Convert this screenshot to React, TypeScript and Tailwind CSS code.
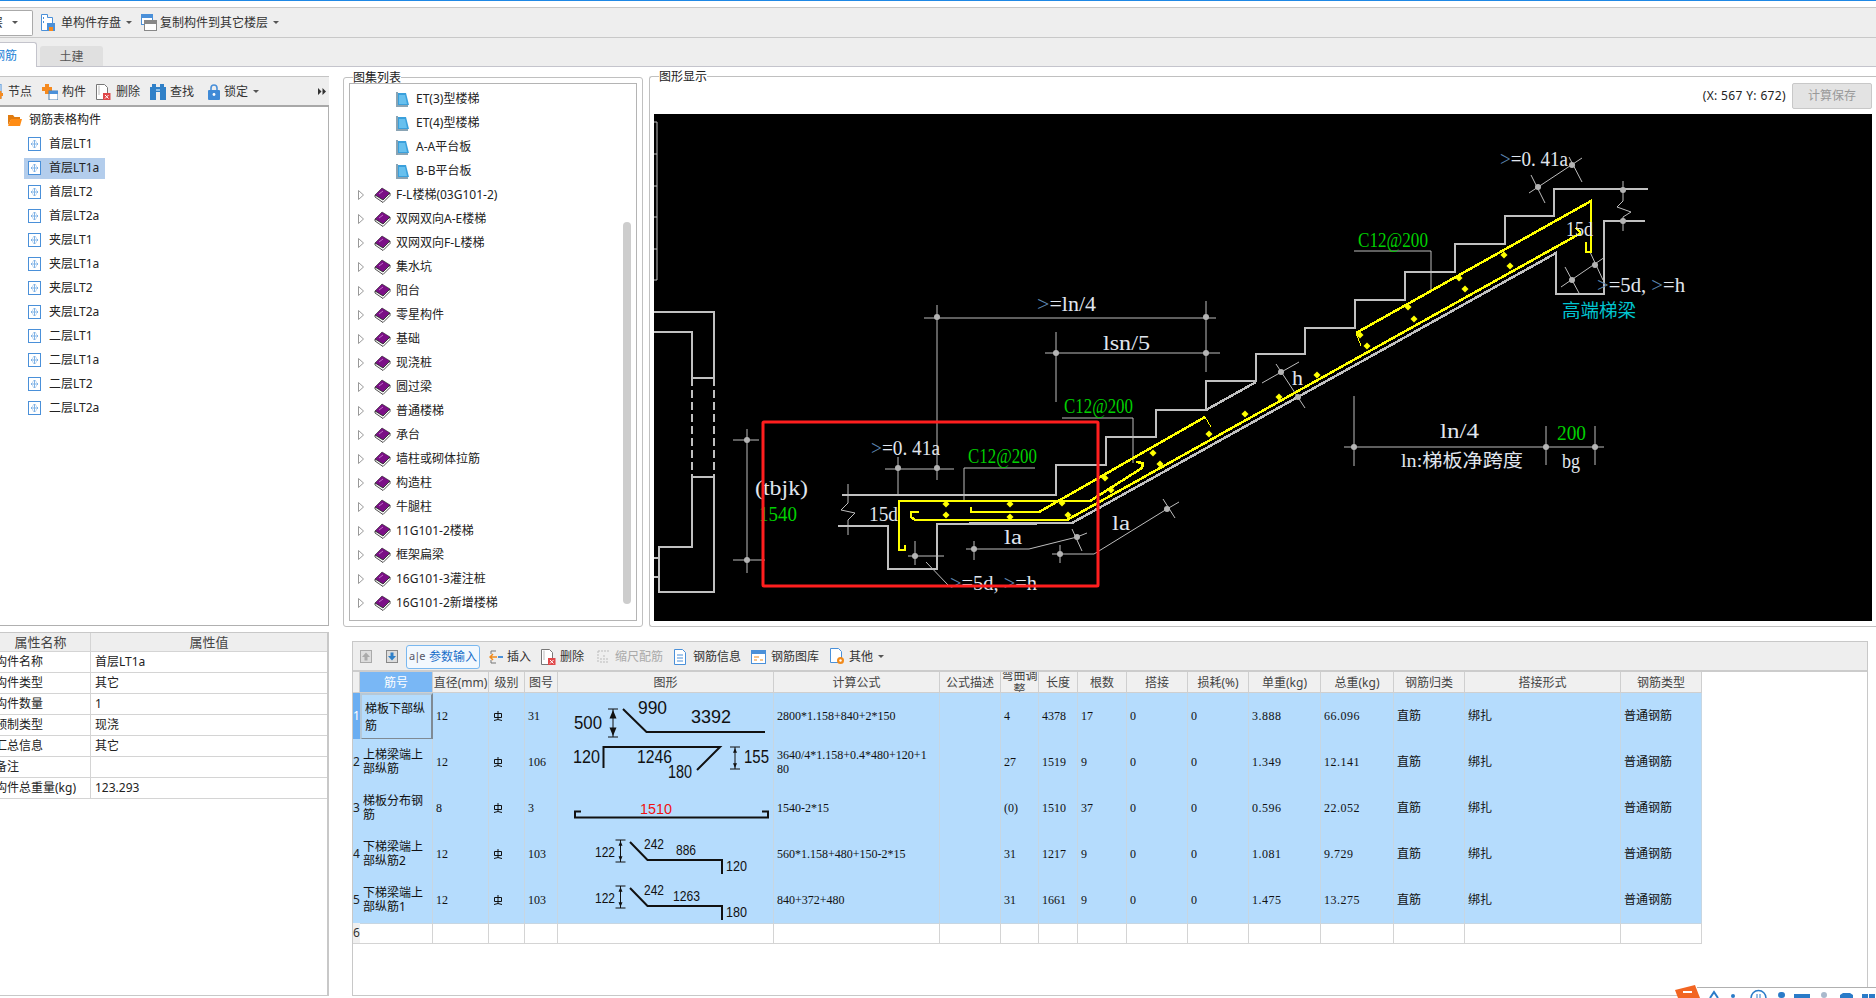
import type { ReactNode } from "react";

const SERIF = "'Liberation Serif','Noto Sans CJK SC',serif";
const SANS = "'Liberation Sans',sans-serif";

const treeItems = [
  "首层LT1", "首层LT1a", "首层LT2", "首层LT2a", "夹层LT1", "夹层LT1a",
  "夹层LT2", "夹层LT2a", "二层LT1", "二层LT1a", "二层LT2", "二层LT2a",
];

const sheetItems = ["ET(3)型楼梯", "ET(4)型楼梯", "A-A平台板", "B-B平台板"];

const bookItems = [
  "F-L楼梯(03G101-2)", "双网双向A-E楼梯", "双网双向F-L楼梯", "集水坑", "阳台", "零星构件",
  "基础", "现浇桩", "圆过梁", "普通楼梯", "承台", "墙柱或砌体拉筋", "构造柱", "牛腿柱",
  "11G101-2楼梯", "框架扁梁", "16G101-3灌注桩", "16G101-2新增楼梯",
];

const properties = [
  ["构件名称", "首层LT1a"],
  ["构件类型", "其它"],
  ["构件数量", "1"],
  ["预制类型", "现浇"],
  ["汇总信息", "其它"],
  ["备注", ""],
  ["构件总重量(kg)", "123.293"],
];

const headers = [
  "", "筋号", "直径(mm)", "级别", "图号", "图形", "计算公式", "公式描述", "弯曲调整", "长度",
  "根数", "搭接", "损耗(%)", "单重(kg)", "总重(kg)", "钢筋归类", "搭接形式", "钢筋类型",
];

const rows = [
  { name: "梯板下部纵筋", dia: "12", no: "31", formula: "2800*1.158+840+2*150", bend: "4", len: "4378", count: "17", unit: "3.888", total: "66.096" },
  { name: "上梯梁端上部纵筋", dia: "12", no: "106", formula: "3640/4*1.158+0.4*480+120+1\n80", bend: "27", len: "1519", count: "9", unit: "1.349", total: "12.141" },
  { name: "梯板分布钢筋", dia: "8", no: "3", formula: "1540-2*15", bend: "(0)", len: "1510", count: "37", unit: "0.596", total: "22.052" },
  { name: "下梯梁端上部纵筋2", dia: "12", no: "103", formula: "560*1.158+480+150-2*15", bend: "31", len: "1217", count: "9", unit: "1.081", total: "9.729" },
  { name: "下梯梁端上部纵筋1", dia: "12", no: "103", formula: "840+372+480", bend: "31", len: "1661", count: "9", unit: "1.475", total: "13.275" },
];

// page coordinates, the drawing's viewBox starts at the canvas corner
const grayLines = [
  "654,312 714,312 714,378", "654,332 692,332 692,378", "692,378 714,378",
  "692,477 714,477", "692,477 692,547 659,547 659,592 714,592 714,477",
  "654,558 659,558", "654,577 659,577",
  "842,495 1056,495 1056,465 1106,465 1106,437 1156,437 1156,410 1206,410 1206,381 1256,381 1256,354 1305,354 1305,328 1355,328 1355,300 1405,300 1405,272 1455,272 1455,244 1505,244 1505,216 1554,216 1554,189 1648,189",
  "1206,410 1256,382",
  "838,526 888,526 888,569 937,569 937,524 1072,523 1556,253 1556,294 1604,294 1604,221 1645,221",
];

const thinLines = [
  "654,122 657,122 657,280 654,280", "654,154 657,154", "654,186 657,186", "654,217 657,217", "654,249 657,249",
  "747,429 747,573", "733,440 759,440", "733,560 765,560",
  "885,469 954,469", "898,457 898,495", "937,305 937,480",
  "924,318 1216,318", "1206,301 1206,372", "1045,353 1220,353", "1056,332 1056,402",
  "1062,418 1133,418 1133,463", "964,500 964,468 1035,468",
  "1354,251 1431,251 1431,290",
  "848,484 848,503 841,510 855,513 848,520 848,535",
  "915,541 915,565", "908,556 944,556", "926,562 948,585",
  "966,549 1029,549 1077,537 1087,533", "974,541 974,560", "1072,529 1082,551",
  "1052,554 1094,554 1167,509 1179,502", "1060,545 1060,563", "1163,499 1175,518",
  "1529,193 1582,158", "1531,175 1545,203", "1569,157 1582,182",
  "1623,181 1623,201 1617,207 1631,212 1623,217 1623,231",
  "1561,287 1605,257", "1565,267 1579,293", "1590,252 1603,280",
  "1276,364 1305,408", "1262,383 1299,362",
  "1344,447 1604,447", "1354,396 1354,466", "1546,426 1546,465", "1595,426 1595,465",
];

const dimDots = [
  [747, 440], [747, 560], [898, 468], [937, 468], [937, 317], [1206, 317], [1056, 353], [1206, 353],
  [915, 556], [974, 549], [1077, 537], [1060, 554], [1167, 509], [1538, 187], [1572, 165], [1623, 190],
  [1623, 221], [1572, 280], [1595, 265], [1281, 372], [1298, 397], [1354, 447], [1546, 447], [1595, 447],
];

const yellowLines = [
  "1586,242 1586,252 1591,252 1591,201 1356,333",
  "1581,233 1067,520 915,520 911,517 911,512 919,512",
  "1576,228 1581,233",
  "905,545 905,550 899,550 899,501 1090,501 1142,468 1143,463 1136,462",
  "971,507 971,512 1039,512 1205,417",
];

const yellowDots = [
  [946, 504], [946, 515], [1010, 504], [1010, 517], [1062, 503], [1068, 515], [1105, 478], [1111, 490],
  [1153, 453], [1160, 464], [1209, 434], [1245, 414], [1279, 397], [1317, 375], [1360, 335], [1367, 346],
  [1408, 307], [1414, 319], [1459, 278], [1465, 289], [1504, 255], [1510, 266],
];

function CadText({ x, y, w, fill = "#e0e6ee", size = 20, children }: { x: number; y: number; w: number; fill?: string; size?: number; children: ReactNode }) {
  return (
    <text x={x} y={y} textLength={w} lengthAdjust="spacingAndGlyphs" fill={fill} fontSize={size} fontFamily={SERIF} dominantBaseline="central">
      {children}
    </text>
  );
}

function StairDrawing() {
  return (
    <svg viewBox="654 114 1218 507" width={1218} height={507} className="block bg-black">
      <g fill="none" stroke="#c0c0c0" strokeWidth={2.5} shapeRendering="crispEdges">
        {grayLines.map((p) => <polyline key={p} points={p} />)}
        <path d="M692 378V477M714 378V477" strokeDasharray="8 4" />
      </g>
      <g fill="none" stroke="#bdbdbd" strokeWidth={1}>
        {thinLines.map((p) => <polyline key={p} points={p} />)}
      </g>
      {dimDots.map(([x, y]) => <circle key={`${x}-${y}`} cx={x} cy={y} r={3} fill="#b4b4b4" />)}
      <g fill="none" stroke="#ffff00" strokeWidth={2.5} shapeRendering="crispEdges">
        {yellowLines.map((p) => <polyline key={p} points={p} />)}
        <path d="M1205 417L1211 427M1356 333L1361 346" strokeWidth={1} />
      </g>
      {yellowDots.map(([x, y]) => <rect key={`${x}-${y}`} x={x - 2.5} y={y - 2.5} width={5} height={5} fill="#ffff00" transform={`rotate(45 ${x} ${y})`} />)}

      <CadText x={1037} y={304} w={59}><tspan fill="#5d86b0">&gt;</tspan>=ln/4</CadText>
      <CadText x={1103} y={343} w={47}>lsn/5</CadText>
      <CadText x={1500} y={159} w={68}><tspan fill="#5d86b0">&gt;</tspan>=0. 41a</CadText>
      <CadText x={1358} y={240} w={70} fill="#00d000">C12@200</CadText>
      <CadText x={1566} y={229} w={27}>15d</CadText>
      <CadText x={1597} y={285} w={88}><tspan fill="#5d86b0">&gt;</tspan>=5d, <tspan fill="#5d86b0">&gt;</tspan>=h</CadText>
      <CadText x={1562} y={311} w={74} fill="#00c4d0" size={18}>高端梯梁</CadText>
      <CadText x={1292} y={378} w={11}>h</CadText>
      <CadText x={1440} y={431} w={39}>ln/4</CadText>
      <CadText x={1557} y={433} w={29} fill="#00d000">200</CadText>
      <CadText x={1401} y={461} w={122} size={18}>ln:梯板净跨度</CadText>
      <CadText x={1562} y={461} w={18}>bg</CadText>
      <CadText x={1064} y={406} w={69} fill="#00d000">C12@200</CadText>
      <CadText x={968} y={456} w={69} fill="#00d000">C12@200</CadText>
      <CadText x={871} y={448} w={69}><tspan fill="#5d86b0">&gt;</tspan>=0. 41a</CadText>
      <CadText x={755} y={488} w={53}>(tbjk)</CadText>
      <CadText x={759} y={514} w={38} fill="#00d000">1540</CadText>
      <CadText x={869} y={514} w={29}>15d</CadText>
      <CadText x={1004} y={537} w={18}>la</CadText>
      <CadText x={1112} y={523} w={18}>la</CadText>
      <CadText x={950} y={583} w={87}><tspan fill="#5d86b0">&gt;</tspan>=5d, <tspan fill="#5d86b0">&gt;</tspan>=h</CadText>

      <rect x={763} y={422} width={335} height={164} rx={1} fill="none" stroke="#ff1e1e" strokeWidth={3} />
    </svg>
  );
}

function ShapeText({ x, y, w, size = 18, fill = "#111", children }: { x: number; y: number; w: number; size?: number; fill?: string; children: ReactNode }) {
  return (
    <text x={x} y={y} textLength={w} lengthAdjust="spacingAndGlyphs" fontSize={size} fill={fill} fontFamily={SANS} dominantBaseline="central">
      {children}
    </text>
  );
}

function DimBar({ x, top, bottom, head = 3 }: { x: number; top: number; bottom: number; head?: number }) {
  return (
    <g>
      <path d={`M${x - 5} ${top}h10M${x} ${top}V${bottom}M${x - 5} ${bottom}h10`} stroke="#111" fill="none" />
      <path d={`M${x} ${top + 1}l${head} ${head * 2.4}h${-head * 2}zM${x} ${bottom - 1}l${head} ${-head * 2.4}h${-head * 2}z`} fill="#111" />
    </g>
  );
}

function RebarShape({ index }: { index: number }) {
  return (
    <svg viewBox="0 0 216 46" width={216} height={46} className="block">
      {index === 0 && (
        <g>
          <ShapeText x={16} y={29} w={28} size={19}>500</ShapeText>
          <DimBar x={55} top={16} bottom={44} head={3.5} />
          <path d="M65 16L88.5 39H207" fill="none" stroke="#111" strokeWidth={2} />
          <ShapeText x={80} y={14} w={29} size={19}>990</ShapeText>
          <ShapeText x={133} y={23} w={40} size={19}>3392</ShapeText>
        </g>
      )}
      {index === 1 && (
        <g>
          <ShapeText x={15} y={18} w={27}>120</ShapeText>
          <path d="M45.5 29V8H162L139 31" fill="none" stroke="#111" strokeWidth={2} />
          <ShapeText x={79} y={18} w={35}>1246</ShapeText>
          <ShapeText x={110} y={33} w={24}>180</ShapeText>
          <DimBar x={177} top={8} bottom={30} head={2} />
          <ShapeText x={186} y={18} w={25}>155</ShapeText>
        </g>
      )}
      {index === 2 && (
        <g>
          <ShapeText x={82} y={23} w={32} size={15} fill="#f01010">1510</ShapeText>
          <path d="M23 26.5H17V32.5H210V26.5H204" fill="none" stroke="#111" strokeWidth={2} />
        </g>
      )}
      {index > 2 && (
        <g>
          <ShapeText x={37} y={20} w={20} size={15}>122</ShapeText>
          <DimBar x={62.5} top={9} bottom={31} head={2} />
          <path d="M72 11L89.5 29H164V43" fill="none" stroke="#111" strokeWidth={2} />
          <ShapeText x={86} y={12} w={20} size={15}>242</ShapeText>
          {index === 3 ? (
            <ShapeText x={118} y={18} w={20} size={15}>886</ShapeText>
          ) : (
            <ShapeText x={115} y={18} w={27} size={15}>1263</ShapeText>
          )}
          <ShapeText x={168} y={34} w={21} size={15}>{index === 3 ? "120" : "180"}</ShapeText>
        </g>
      )}
    </svg>
  );
}

function Caret({ className = "" }: { className?: string }) {
  return <span className={`inline-block h-0 w-0 border-x-[3px] border-t-[3px] border-x-transparent border-t-[#555] ${className}`} />;
}

function GradeMark() {
  return (
    <svg viewBox="0 0 10 11" width={10} height={11} fill="none" stroke="#111" strokeWidth={1}>
      <path d="M1.5 2.5h7v4h-7zM5 0v8.5M1 9.5l4-1 4 1" />
    </svg>
  );
}

function TreeNodeIcon() {
  return (
    <svg viewBox="0 0 13 14" width={13} height={14} className="shrink-0" fill="none">
      <rect x={0.5} y={0.5} width={12} height={13} fill="#fff" stroke="#4a90d9" />
      <path d="M6.5 3v8M3 7h7M6.5 3L5 4.5M6.5 3L8 4.5M3 7l1.5-1.5M3 7l1.5 1.5M10 7L8.5 5.5M10 7L8.5 8.5M6.5 11L5 9.5M6.5 11L8 9.5" stroke="#7fb2e6" />
    </svg>
  );
}

function FolderIcon() {
  return (
    <svg viewBox="0 0 14 12" width={14} height={12} className="shrink-0">
      <path d="M0 1h5l1.5 2H12v2H3.5L0 11z" fill="#e07b10" />
      <path d="M3 5h11l-2 7H0z" fill="#ff8c14" />
    </svg>
  );
}

function BookIcon() {
  return (
    <svg viewBox="0 0 17 16" width={17} height={16} className="shrink-0">
      <path d="M1 8L8 1L16 6L9 13z" fill="#7b0f86" stroke="#222" strokeWidth={0.6} />
      <path d="M1 8V10L9 15.5L16 8.5V6L9 13z" fill="#fff" stroke="#222" strokeWidth={0.8} />
      <path d="M5 7L9 4" stroke="#c070c8" />
    </svg>
  );
}

function SheetIcon() {
  return (
    <svg viewBox="0 0 13 15" width={13} height={15} className="shrink-0">
      <path d="M1 1h9l3 12H1z" fill="#3aa0dc" />
      <path d="M3 3h6l2 9H3z" fill="#67c0ee" />
      <path d="M0 0h2v15H0zM0 13h12v2H0z" fill="#8aa4b4" />
    </svg>
  );
}

function DocIcon({ badge, stroke = "#777", lines = false }: { badge?: string; stroke?: string; lines?: boolean }) {
  return (
    <svg viewBox="0 0 15 16" width={15} height={16} className="shrink-0" fill="none">
      <path d="M.5.5h8l3 3v12h-11z" fill="#fff" stroke={stroke} />
      {!lines && <path d="M3 1.5V11" stroke="#bbb" />}
      {lines && <path d="M3 6h6M3 9h6M3 12h6" stroke={stroke} />}
      {badge && <rect x={7} y={9} width={7.5} height={7} fill={badge} />}
      {badge && <path d="M9 11l3.5 3.5M12.5 11L9 14.5" stroke="#fff" />}
    </svg>
  );
}

function ToolItem({ icon, label, className = "", textClass = "" }: { icon: ReactNode; label: string; className?: string; textClass?: string }) {
  return (
    <div className={`flex shrink-0 items-center ${className}`}>
      {icon}
      <span className={`whitespace-nowrap ${textClass}`}>{label}</span>
    </div>
  );
}

function LeftToolbar() {
  return (
    <div className="flex h-[31px] items-center border-y border-b-2 border-y-[#c4c4c4] border-b-[#a8a8a8] bg-[#eeeeee] pt-[1px] text-[12px] text-[#333]">
      <ToolItem className="-ml-[11px]" icon={
        <svg viewBox="0 0 15 16" width={15} height={16} className="mr-[4px]"><rect x={1} y={0} width={11} height={14} fill="#fff" stroke="#4a90d9" /><path d="M8 9h6v3h-6zM9.5 7h3v8h-3z" fill="#f58a1f" /></svg>
      } label="节点" />
      <ToolItem className="ml-[10px]" icon={
        <svg viewBox="0 0 16 16" width={16} height={16} className="mr-[4px]"><path d="M3 0h4v3h3v4H7v3H3V7H0V3h3z" fill="#f58a1f" /><rect x={7} y={7} width={9} height={9} fill="#fff" stroke="#4a7fb0" /><path d="M7 7h9v3H7z" fill="#4a90d9" /></svg>
      } label="构件" />
      <ToolItem className="ml-[10px]" icon={<span className="mr-[5px] flex"><DocIcon badge="#e0484a" /></span>} label="删除" />
      <ToolItem className="ml-[10px]" icon={
        <svg viewBox="0 0 16 16" width={16} height={16} className="mr-[4px]" fill="#2f80c8"><path d="M2 0h4v3h4V0h4v3h2v13H10V8H6v8H0V3h2z" /><path d="M6 5h4v2H6z" fill="#8cc0ea" /></svg>
      } label="查找" />
      <ToolItem className="ml-[14px]" icon={
        <svg viewBox="0 0 12 16" width={12} height={16} className="mr-[4px]"><path d="M3 7V4a3 3 0 016 0v3" fill="none" stroke="#4a90d9" strokeWidth={1.6} /><rect y={6} width={12} height={10} rx={1} fill="#3f8ad6" /><circle cx={6} cy={10.5} r={1.4} fill="#fff" /></svg>
      } label="锁定" />
      <Caret className="ml-[5px]" />
      <svg viewBox="0 0 8 7" width={8} height={7} className="ml-auto mr-[3px]" fill="#333"><path d="M0 0l3.5 3.5L0 7zM4.5 0L8 3.5 4.500 7z" /></svg>
    </div>
  );
}

function ComponentTree() {
  return (
    <div className="h-[519px] border-r border-b border-[#b0b0b0] pt-[1px] text-[12px] text-[#222]">
      <div className="flex h-[24px] items-center gap-[7px] pl-[8px]">
        <FolderIcon />
        <span>钢筋表格构件</span>
      </div>
      {treeItems.map((item) => (
        <div key={item} className="flex h-[24px] items-center pl-[24px]">
          <div className={`flex h-[21px] w-[81px] items-center gap-[8px] pl-[4px] ${item === "首层LT1a" ? "bg-[#b3cdec]" : ""}`}>
            <TreeNodeIcon />
            <span>{item}</span>
          </div>
        </div>
      ))}
    </div>
  );
}

function PropertyGrid() {
  return (
    <div className="mt-[6px] h-[364px] overflow-hidden border-t border-r-2 border-b border-t-[#c8c8c8] border-r-[#c8c8c8] border-b-[#c8c8c8] text-[12px] text-[#222]">
      <div className="-ml-[9px] grid grid-cols-[100px_236px] border-b border-[#d4d4d4] bg-[#eeeeee] text-center text-[13px] text-[#444]">
        <div className="h-[18px] border-r border-[#d4d4d4] leading-[18px]">属性名称</div>
        <div className="h-[18px] leading-[18px]">属性值</div>
      </div>
      {properties.map(([name, value]) => (
        <div key={name} className="-ml-[9px] grid h-[21px] grid-cols-[100px_236px] border-b border-[#d4d4d4] leading-[20px]">
          <div className="border-r border-[#d4d4d4] pl-[4px]">{name}</div>
          <div className="pl-[4px]">{value}</div>
        </div>
      ))}
    </div>
  );
}

function AtlasGroup() {
  return (
    <div className="relative mt-[1px] h-[550px] w-[300px] shrink-0 rounded-[3px] border border-[#c0c0c0] p-[5px] text-[12px] text-[#222]">
      <span className="absolute -top-[8px] left-[9px] bg-white leading-[15px]">图集列表</span>
      <div className="relative h-[538px] overflow-hidden border border-[#b4b4b4] pt-[3px]">
        {sheetItems.map((item) => (
          <div key={item} className="flex h-[24px] items-center gap-[7px] pl-[46px]"><SheetIcon /><span>{item}</span></div>
        ))}
        {bookItems.map((item) => (
          <div key={item} className="flex h-[24px] items-center pl-[8px]">
            <svg viewBox="0 0 6 10" width={6} height={10} className="mr-[10px] shrink-0"><path d="M.5.5L5.5 5L.5 9.5z" fill="#fff" stroke="#999" /></svg>
            <BookIcon />
            <span className="ml-[5px]">{item}</span>
          </div>
        ))}
        <div className="absolute left-[273px] top-[138px] h-[382px] w-[8px] rounded-[4px] bg-[#cdcdcd]" />
      </div>
    </div>
  );
}

function DrawingGroup() {
  return (
    <div className="relative ml-[6px] h-[551px] w-[1227px] shrink-0 rounded-tl-[3px] rounded-bl-[3px] border border-r-0 border-[#c0c0c0] pl-[4px] text-[12px]">
      <span className="absolute -top-[8px] left-[9px] bg-white leading-[15px] text-[#222]">图形显示</span>
      <div className="flex h-[37px] items-center justify-end pr-[4px]">
        <span className="mr-[6px] tracking-[0.35px] text-[#222]">(X: 567 Y: 672)</span>
        <button className="h-[26px] w-[80px] rounded-[2px] border border-[#c8c8c8] bg-[#e3e3e3] text-[#999]">计算保存</button>
      </div>
      <StairDrawing />
    </div>
  );
}

function BarToolbar() {
  return (
    <div className="flex h-[30px] items-center border-b-2 border-[#cccccc] bg-[#eeeeee] pl-[7px] pt-[1px] text-[12px] text-[#333]">
      <svg viewBox="0 0 12 13" width={12} height={13} className="shrink-0"><rect x={0.5} y={0.5} width={11} height={12} fill="#ddd" stroke="#aaa" /><path d="M6 2.5L10 7H7.5v3.5h-3V7H2z" fill="#aaa" /></svg>
      <svg viewBox="0 0 12 13" width={12} height={13} className="ml-[14px] shrink-0"><rect x={0.5} y={0.5} width={11} height={12} fill="#ddd" stroke="#888" /><path d="M6 10.5L10 6H7.5V2.5h-3V6H2z" fill="#2f80c8" /></svg>
      <div className="ml-[8px] flex h-[24px] w-[74px] shrink-0 items-center rounded-[3px] border border-[#79b8f0] bg-[#f2f8fe] pl-[2px]">
        <span className="flex w-[19px] items-center text-[11px] tracking-[-1px] text-[#556]">a|e</span>
        <span className="ml-[1px] whitespace-nowrap text-[#1a6fc9]">参数输入</span>
      </div>
      <ToolItem className="ml-[9px]" icon={
        <svg viewBox="0 0 14 16" width={14} height={16} className="mr-[4px]" fill="none"><path d="M7 2H2v3M2 11v3h5" stroke="#777" /><path d="M1 8h7M4 5L1 8l3 3" stroke="#f08a1c" strokeWidth={1.5} /><path d="M9 7h5v2H9z" fill="#4a90d9" /></svg>
      } label="插入" />
      <ToolItem className="ml-[10px]" icon={<span className="mr-[4px] flex"><DocIcon badge="#e0484a" /></span>} label="删除" />
      <ToolItem className="ml-[13px]" textClass="text-[#aaa]" icon={
        <svg viewBox="0 0 13 15" width={13} height={15} className="mr-[5px]" fill="none" stroke="#bbb"><path d="M1 2h11M1 2v12M4 14V8M7 14V6M10 14V9" strokeDasharray="2 1" /></svg>
      } label="缩尺配筋" />
      <ToolItem className="ml-[11px]" icon={<span className="mr-[4px] flex"><DocIcon stroke="#4a90d9" lines /></span>} label="钢筋信息" />
      <ToolItem className="ml-[10px]" icon={
        <svg viewBox="0 0 15 14" width={15} height={14} className="mr-[5px]" fill="none"><rect x={0.5} y={0.5} width={14} height={13} fill="#fff" stroke="#4a90d9" /><path d="M1 1h13v3H1z" fill="#4a90d9" /><path d="M3 7h5M3 10h3M9 10h3" stroke="#f08a1c" /></svg>
      } label="钢筋图库" />
      <ToolItem className="ml-[11px]" icon={
        <svg viewBox="0 0 15 17" width={15} height={17} className="mr-[4px]" fill="none"><path d="M.5.5h8l3 3v11h-11z" fill="#fff" stroke="#4a90d9" /><circle cx={10.5} cy={12.5} r={3.5} fill="#f08a1c" /><circle cx={10.5} cy={12.5} r={1.2} fill="#fff" /></svg>
      } label="其他" />
      <Caret className="ml-[5px]" />
    </div>
  );
}

const numCell = "flex items-center border-r border-b border-[#c7d6e2] pl-[3px] font-['Liberation_Serif','Noto_Sans_CJK_SC',serif] text-[12px] text-[#111]";
const wideNumCell = "flex items-center border-r border-b border-[#c7d6e2] pl-[3px] font-['Liberation_Serif','Noto_Sans_CJK_SC',serif] text-[12px] tracking-[0.5px] text-[#111]";
const textCell = "flex items-center border-r border-b border-[#c7d6e2] pl-[3px] text-[12px] text-[#111]";
const emptyCell = "border-r border-b border-[#d4d4d4]";

function RebarTable() {
  return (
    <div className="grid w-[1349px] grid-cols-[7px_73px_56px_36px_33px_216px_166px_61px_38px_39px_49px_61px_61px_72px_73px_71px_156px_81px] text-[12px]">
      {headers.map((label, i) => (
        <div
          key={label || "corner"}
          className={`flex h-[21px] items-center justify-center overflow-hidden whitespace-normal border-r border-b border-[#cfcfcf] pt-[1px] text-center leading-[14px] ${i === 1 ? "bg-[#79b7f5] text-white" : "bg-[#f0f0f0] text-[#444]"}`}
        >
          {label === "弯曲调整" ? <span className="w-[36px] break-all">{label}</span> : <span className="whitespace-nowrap">{label}</span>}
        </div>
      ))}
      {rows.map((row, i) => (
        <div key={row.name} className="col-span-full grid h-[46px] grid-cols-subgrid bg-[#b5dcfd]">
          <div className={`flex items-center justify-center border-b border-[#c7d6e2] text-[12px] ${i === 0 ? "bg-[#6aaef2] text-white" : "text-[#222]"}`}>{i + 1}</div>
          <div className={`flex items-center pl-[3px] text-[12px] text-[#111] ${i === 0 ? "border-2 border-[#7f8a94] border-t-[#b5c8d8] border-l-[#b5c8d8] leading-[17px]" : "border-r border-b border-[#c7d6e2] leading-[14px]"}`}>
            <span className="break-all">{row.name}</span>
          </div>
          <div className={numCell}>{row.dia}</div>
          <div className={`${numCell} justify-start pl-[4px]`}><GradeMark /></div>
          <div className={numCell}>{row.no}</div>
          <div className="border-r border-b border-[#c7d6e2]"><RebarShape index={i} /></div>
          <div className={`${numCell} leading-[14px]`}><span className="whitespace-pre-line">{row.formula}</span></div>
          <div className={numCell} />
          <div className={numCell}>{row.bend}</div>
          <div className={numCell}>{row.len}</div>
          <div className={numCell}>{row.count}</div>
          <div className={numCell}>0</div>
          <div className={numCell}>0</div>
          <div className={wideNumCell}>{row.unit}</div>
          <div className={wideNumCell}>{row.total}</div>
          <div className={textCell}>直筋</div>
          <div className={textCell}>绑扎</div>
          <div className={textCell}>普通钢筋</div>
        </div>
      ))}
      <div className="col-span-full grid h-[21px] grid-cols-subgrid">
        <div className="flex items-center justify-center border-b border-[#d4d4d4] bg-[#f0f0f0] text-[#333]">6</div>
        {headers.slice(1).map((label) => <div key={label} className={emptyCell} />)}
      </div>
    </div>
  );
}

function ImeBar() {
  return (
    <div className="absolute right-0 bottom-0 h-[14px] w-[203px] overflow-hidden">
      <div className="absolute top-[3px] right-0 h-[11px] w-[179px] border-t border-[#b0b0b0] bg-white" />
      <svg viewBox="1673 984 203 14" width={203} height={14} className="absolute inset-0">
        <path d="M1675 990L1695 985L1700 998H1678z" fill="#f26522" />
        <path d="M1683 992h9" stroke="#fff" strokeWidth={2} />
        <path d="M1710 998L1714 992L1718 998" fill="none" stroke="#2a7bc8" strokeWidth={2} />
        <circle cx={1733} cy={996} r={2} fill="#2a7bc8" />
        <path d="M1751 998a7.5 7.5 0 0115 0" fill="none" stroke="#2a7bc8" strokeWidth={1.5} />
        <path d="M1757 994v4M1760 994v4" stroke="#2a7bc8" />
        <rect x={1778} y={992} width={7} height={6} rx={3} fill="#2a7bc8" />
        <rect x={1794} y={994} width={16} height={4} fill="#2a7bc8" />
        <circle cx={1824} cy={995} r={3} fill="#a9b9cc" />
        <path d="M1840 998v-3l3-2h7l3 2v3z" fill="#2a7bc8" />
        <path d="M1862 994h6v4h-6zM1869 994h6v4h-6z" fill="#2a7bc8" />
      </svg>
    </div>
  );
}

export default function App() {
  return (
    <div className="relative h-[998px] w-[1876px] overflow-hidden bg-white font-['Noto_Sans','Noto_Sans_CJK_SC',sans-serif] text-[12px]">
      <div className="h-px bg-[#1e88e5]" />
      <div className="mt-[6px] flex h-[31px] items-center border-y border-[#c8c8c8] bg-[#eeeeee] text-[#333]">
        <div className="flex h-[26px] w-[33px] shrink-0 items-center overflow-hidden rounded-r-[2px] border-y border-r border-[#aaa] bg-white">
          <span className="-ml-[9px] shrink-0">层</span>
          <Caret className="ml-[9px] shrink-0" />
        </div>
        <ToolItem className="ml-[8px]" icon={
          <svg viewBox="0 0 14 17" width={14} height={17} className="mr-[6px]" fill="none"><path d="M.5.5h6v3h5v13h-11z" fill="#fff" stroke="#4a90d9" /><rect x={6} y={9} width={8} height={8} fill="#4a90d9" /><rect x={8} y={13} width={4} height={4} fill="#f58a1f" /><path d="M2.5 3v2M2.5 7v2" stroke="#4a90d9" /></svg>
        } label="单构件存盘" />
        <Caret className="ml-[5px]" />
        <ToolItem className="ml-[9px]" icon={
          <svg viewBox="0 0 16 17" width={16} height={17} className="mr-[3px]" fill="none"><rect x={0.5} y={0.5} width={11} height={10} fill="#fff" stroke="#4a90d9" /><path d="M1 1h10v3H1z" fill="#4a90d9" /><rect x={3.5} y={6.5} width={12} height={10} fill="#fff" stroke="#888" /><path d="M4 7h11v3H4z" fill="#888" /></svg>
        } label="复制构件到其它楼层" />
        <Caret className="ml-[5px]" />
      </div>
      <div className="flex h-[29px] items-end border-b border-[#c4c4cc] bg-[#eeeeee]">
        <div className="-mb-px flex h-[25px] w-[37px] items-center overflow-hidden rounded-tr-[3px] border-t border-r border-[#c4c4cc] bg-white pt-[2px] text-[#1a7fd6]">
          <span className="-ml-[7px] shrink-0">钢筋</span>
        </div>
        <div className="ml-[3px] flex h-[20px] w-[63px] items-center justify-center rounded-t-[3px] bg-[#e0e0e0] pt-[2px] text-[#555]">土建</div>
      </div>
      <div className="flex">
        <div className="w-[329px] shrink-0 pt-[9px]">
          <LeftToolbar />
          <ComponentTree />
          <PropertyGrid />
        </div>
        <div className="ml-[14px] flex-1">
          <div className="flex pt-[9px]">
            <AtlasGroup />
            <DrawingGroup />
          </div>
          <div className="ml-[9px] mt-[14px] h-[355px] w-[1516px] overflow-hidden border border-[#c8c8c8]">
            <BarToolbar />
            <RebarTable />
          </div>
        </div>
      </div>
      <ImeBar />
    </div>
  );
}
